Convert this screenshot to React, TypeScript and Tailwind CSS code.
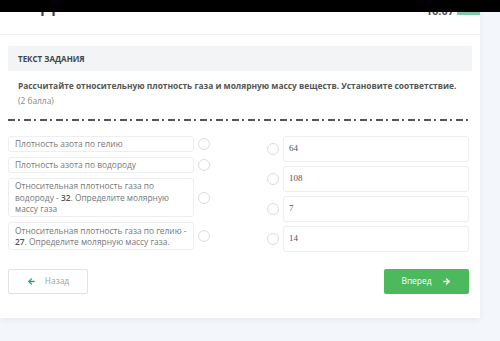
import { ArrowLeft, ArrowRight } from "lucide-react"

const left = [
  { key: "a", h: "h-[16px]", node: <>Плотность азота по гелию</> },
  { key: "b", h: "h-[16px]", node: <>Плотность азота по водороду</> },
  {
    key: "c",
    h: "h-[39px]",
    node: (
      <>
        Относительная плотность газа по водороду - <b className="font-semibold text-[#555]">32</b>. Определите молярную массу газа
      </>
    ),
  },
  {
    key: "d",
    h: "h-[28px]",
    node: (
      <>
        Относительная плотность газа по гелию - <b className="font-semibold text-[#555]">27</b>. Определите молярную массу газа.
      </>
    ),
  },
]

const right = ["64", "108", "7", "14"]

function Radio() {
  return <span className="block size-[12px] shrink-0 rounded-full border border-[#d9dde2] bg-white" />
}

export default function App() {
  return (
    <div className="relative h-[341px] w-[500px] overflow-hidden bg-[#f3f6fb] font-['Open_Sans',sans-serif]">
      {/* black strip over the top of the screenshot */}
      <div className="absolute inset-x-0 top-0 z-10 h-[12px] bg-black" />

      <div className="h-[318px] w-[480px] bg-white shadow-[0_2px_6px_rgba(0,0,0,0.06)]">
        {/* header */}
        <div className="flex h-[35px] items-start justify-between border-b border-[#eef0f2] pl-[16px]">
          <span className="mt-[-5px] text-[19px] font-semibold leading-[20px] tracking-wide text-[#444]">
            ЗАДАНИЕ №3
          </span>
          <div className="flex items-start">
            <span className="mt-[5px] text-[11px] font-bold leading-[12px] text-[#555]">16:07</span>
            <span className="ml-[3px] mt-[12px] h-[3px] w-[23px] bg-[#7fc8a9]" />
          </div>
        </div>

        <div className="px-[8px]">
          <div className="mt-[11px] flex h-[25px] items-center rounded-[2px] bg-[#f3f4f6] px-[10px] text-[8px] font-bold text-[#444]">
            ТЕКСТ ЗАДАНИЯ
          </div>

          <p className="mt-[8px] whitespace-nowrap px-[10px] text-[8.4px] font-bold leading-[14px] text-[#555]">
            Рассчитайте относительную плотность газа и молярную массу веществ. Установите соответствие.
          </p>
          <p className="mt-[2px] px-[10px] text-[8.4px] leading-[12px] text-[#888]">(2 балла)</p>

          <div className="mt-[12px] h-[2px] w-[460px] bg-[repeating-linear-gradient(90deg,#555_0_7px,transparent_7px_10px,#555_10px_12px,transparent_12px_16px)]" />

          {/* matching */}
          <div className="mt-[15px] flex">
            <div className="flex w-[206px] flex-col gap-[5px]">
              {left.map((it) => (
                <div key={it.key} className="flex items-center">
                  <div
                    className={`flex w-[186px] items-center rounded-[3px] border border-[#eceef1] px-[6px] text-[8.4px] leading-[11.5px] text-[#777] ${it.h}`}
                  >
                    <span>{it.node}</span>
                  </div>
                  <span className="ml-[4px]">
                    <Radio />
                  </span>
                </div>
              ))}
            </div>

            <div className="ml-[53px] flex flex-col gap-[4px]">
              {right.map((r) => (
                <div key={r} className="flex items-center">
                  <Radio />
                  <div className="ml-[4px] flex h-[26px] w-[186px] items-center rounded-[3px] border border-[#eceef1] px-[5px] font-['Liberation_Serif',serif] text-[9px] text-[#555]">
                    {r}
                  </div>
                </div>
              ))}
            </div>
          </div>

          {/* buttons */}
          <div className="mt-[17px] flex items-center justify-between pr-[3px]">
            <button className="flex h-[25px] w-[80px] items-center justify-center gap-[9px] rounded-[2px] border border-[#dde2e6] bg-white text-[8.4px] text-[#8aa8a6]">
              <ArrowLeft className="size-[9px] text-[#3d9a7f]" strokeWidth={3.5} />
              Назад
            </button>
            <button className="flex h-[25px] w-[85px] items-center justify-center gap-[11px] rounded-[2px] bg-[#4cb95c] text-[8.4px] text-white">
              Вперед
              <ArrowRight className="size-[9px]" strokeWidth={3.5} />
            </button>
          </div>
        </div>
      </div>
    </div>
  )
}
